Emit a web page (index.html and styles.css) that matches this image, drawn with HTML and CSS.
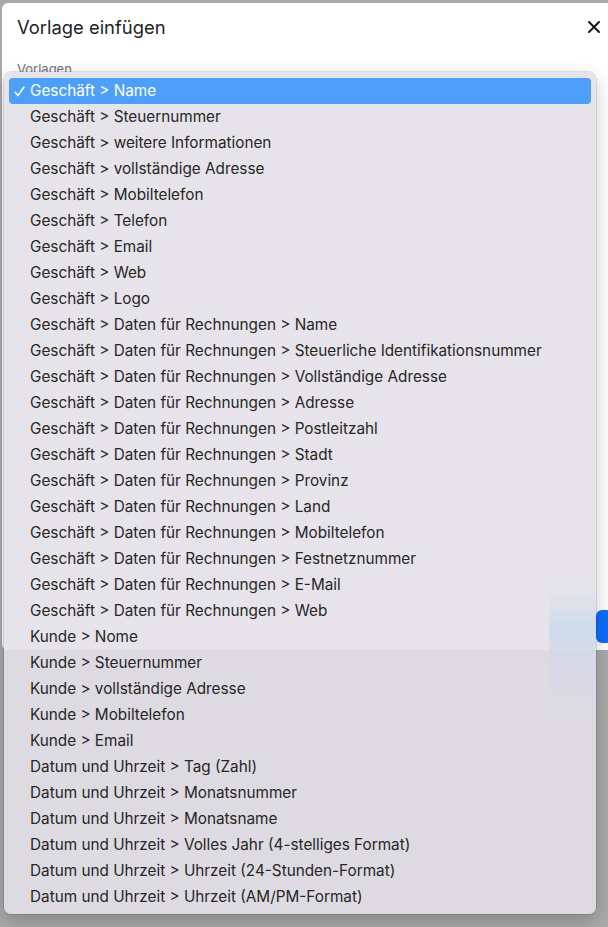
FILE: index.html
```html
<!DOCTYPE html>
<html lang="de">
<head>
<meta charset="utf-8">
<title>Vorlage einfügen</title>
<link rel="stylesheet" href="styles.css">
</head>
<body>
<div class="modal">
  <div class="modal-header">
    <h5 class="modal-title">Vorlage einfügen</h5>
    <svg class="close" width="12" height="12" viewBox="0 0 12 12"><path d="M1 1L11 11M11 1L1 11" stroke="#111" stroke-width="1.9" stroke-linecap="round" fill="none"/></svg>
  </div>
  <div class="modal-body">
    <label class="label">Vorlagen</label>
    <div class="select"><svg class="chev" width="8" height="8" viewBox="0 0 8 8"><path d="M1 6L6 1" stroke="#333" stroke-width="1.4" fill="none"/></svg></div>
    <div class="spacer"></div>
    <div class="footer"><span class="btn"></span></div>
  </div>
</div>

<ul class="menu">
  <li class="item selected"><svg class="check" width="11" height="11" viewBox="0 0 11 11"><path d="M1.2 6.2L4 9.6L9.8 1.2" stroke="#fff" stroke-width="1.6" stroke-linecap="round" stroke-linejoin="round" fill="none"/></svg>Geschäft &gt; Name</li>
  <li class="item">Geschäft &gt; Steuernummer</li>
  <li class="item">Geschäft &gt; weitere Informationen</li>
  <li class="item">Geschäft &gt; vollständige Adresse</li>
  <li class="item">Geschäft &gt; Mobiltelefon</li>
  <li class="item">Geschäft &gt; Telefon</li>
  <li class="item">Geschäft &gt; Email</li>
  <li class="item">Geschäft &gt; Web</li>
  <li class="item">Geschäft &gt; Logo</li>
  <li class="item">Geschäft &gt; Daten für Rechnungen &gt; Name</li>
  <li class="item">Geschäft &gt; Daten für Rechnungen &gt; Steuerliche Identifikationsnummer</li>
  <li class="item">Geschäft &gt; Daten für Rechnungen &gt; Vollständige Adresse</li>
  <li class="item">Geschäft &gt; Daten für Rechnungen &gt; Adresse</li>
  <li class="item">Geschäft &gt; Daten für Rechnungen &gt; Postleitzahl</li>
  <li class="item">Geschäft &gt; Daten für Rechnungen &gt; Stadt</li>
  <li class="item">Geschäft &gt; Daten für Rechnungen &gt; Provinz</li>
  <li class="item">Geschäft &gt; Daten für Rechnungen &gt; Land</li>
  <li class="item">Geschäft &gt; Daten für Rechnungen &gt; Mobiltelefon</li>
  <li class="item">Geschäft &gt; Daten für Rechnungen &gt; Festnetznummer</li>
  <li class="item">Geschäft &gt; Daten für Rechnungen &gt; E-Mail</li>
  <li class="item">Geschäft &gt; Daten für Rechnungen &gt; Web</li>
  <li class="item">Kunde &gt; Nome</li>
  <li class="item">Kunde &gt; Steuernummer</li>
  <li class="item">Kunde &gt; vollständige Adresse</li>
  <li class="item">Kunde &gt; Mobiltelefon</li>
  <li class="item">Kunde &gt; Email</li>
  <li class="item">Datum und Uhrzeit &gt; Tag (Zahl)</li>
  <li class="item">Datum und Uhrzeit &gt; Monatsnummer</li>
  <li class="item">Datum und Uhrzeit &gt; Monatsname</li>
  <li class="item">Datum und Uhrzeit &gt; Volles Jahr (4-stelliges Format)</li>
  <li class="item">Datum und Uhrzeit &gt; Uhrzeit (24-Stunden-Format)</li>
  <li class="item">Datum und Uhrzeit &gt; Uhrzeit (AM/PM-Format)</li>
</ul>
<div class="glow"></div>
</body>
</html>
```
FILE: styles.css
```css
html, body {
  margin: 0;
  padding: 0;
  height: 100%;
  overflow: hidden;
}
body {
  background: #a9a9a9;
  font-family: "Inter", "Liberation Sans", sans-serif;
  color: #212529;
  padding-top: 3px;
  padding-left: 2px;
  box-sizing: border-box;
}
.modal {
  background: #ffffff;
  width: 640px;
  height: 647px;
  border-top-left-radius: 6px;
  border-bottom-left-radius: 6px;
  box-sizing: border-box;
  display: flex;
  flex-direction: column;
}
.modal-header {
  display: flex;
  align-items: center;
  justify-content: space-between;
  height: 48px;
  padding: 0 42px 0 15px;
}
.modal-title {
  margin: 0;
  font-size: 18.4px;
  font-weight: 400;
  color: #212529;
}
.close {
  display: block;
}
.modal-body {
  padding: 11px 15px 0 15px;
  flex: 1;
  display: flex;
  flex-direction: column;
}
.label {
  font-size: 13px;
  color: #6c757d;
  height: 14px;
  line-height: 14px;
}
.select {
  margin-top: 6px;
  height: 36px;
  border: 1px solid #86b7fe;
  border-radius: 6px;
  box-shadow: 0 0 0 1px rgba(13,110,253,.25);
  position: relative;
  margin-right: 34px;
}
.chev {
  position: absolute;
  right: 3px;
  top: 14px;
}
.spacer { flex: 1; }
.footer {
  height: 33px;
  margin-bottom: 7px;
  display: flex;
  justify-content: flex-end;
  margin-right: -15px;
}
.btn {
  width: 44px;
  height: 33px;
  background: #0d6efd;
  border-radius: 6px;
  margin-right: 2px;
}
.menu {
  position: absolute;
  left: 4px;
  top: 72px;
  width: 592px;
  margin: 0;
  padding: 6px 5px 4px 5px;
  box-sizing: border-box;
  list-style: none;
  background: linear-gradient(to bottom, #e6e3ea 0, #e6e3ea 578px, #dddae1 578px, #dddae1 100%);
  border-radius: 7px;
  box-shadow: 0 0 0 0.5px rgba(0,0,0,0.18), 0 6px 18px rgba(0,0,0,0.22);
}
.item {
  height: 26px;
  line-height: 26px;
  padding-left: 21px;
  font-size: 15.3px;
  color: #262626;
  white-space: nowrap;
  position: relative;
  border-radius: 4px;
}
.item.selected {
  background: #4d9ff9;
  color: #ffffff;
}
.check {
  position: absolute;
  left: 5px;
  top: 8px;
}
.glow {
  position: absolute;
  left: 549px;
  top: 590px;
  width: 47px;
  height: 130px;
  background: linear-gradient(to bottom, rgba(215,228,240,0) 0%, rgba(200,218,235,0.8) 30%, rgba(214,214,234,0.6) 60%, rgba(220,218,232,0) 100%);
}
```
